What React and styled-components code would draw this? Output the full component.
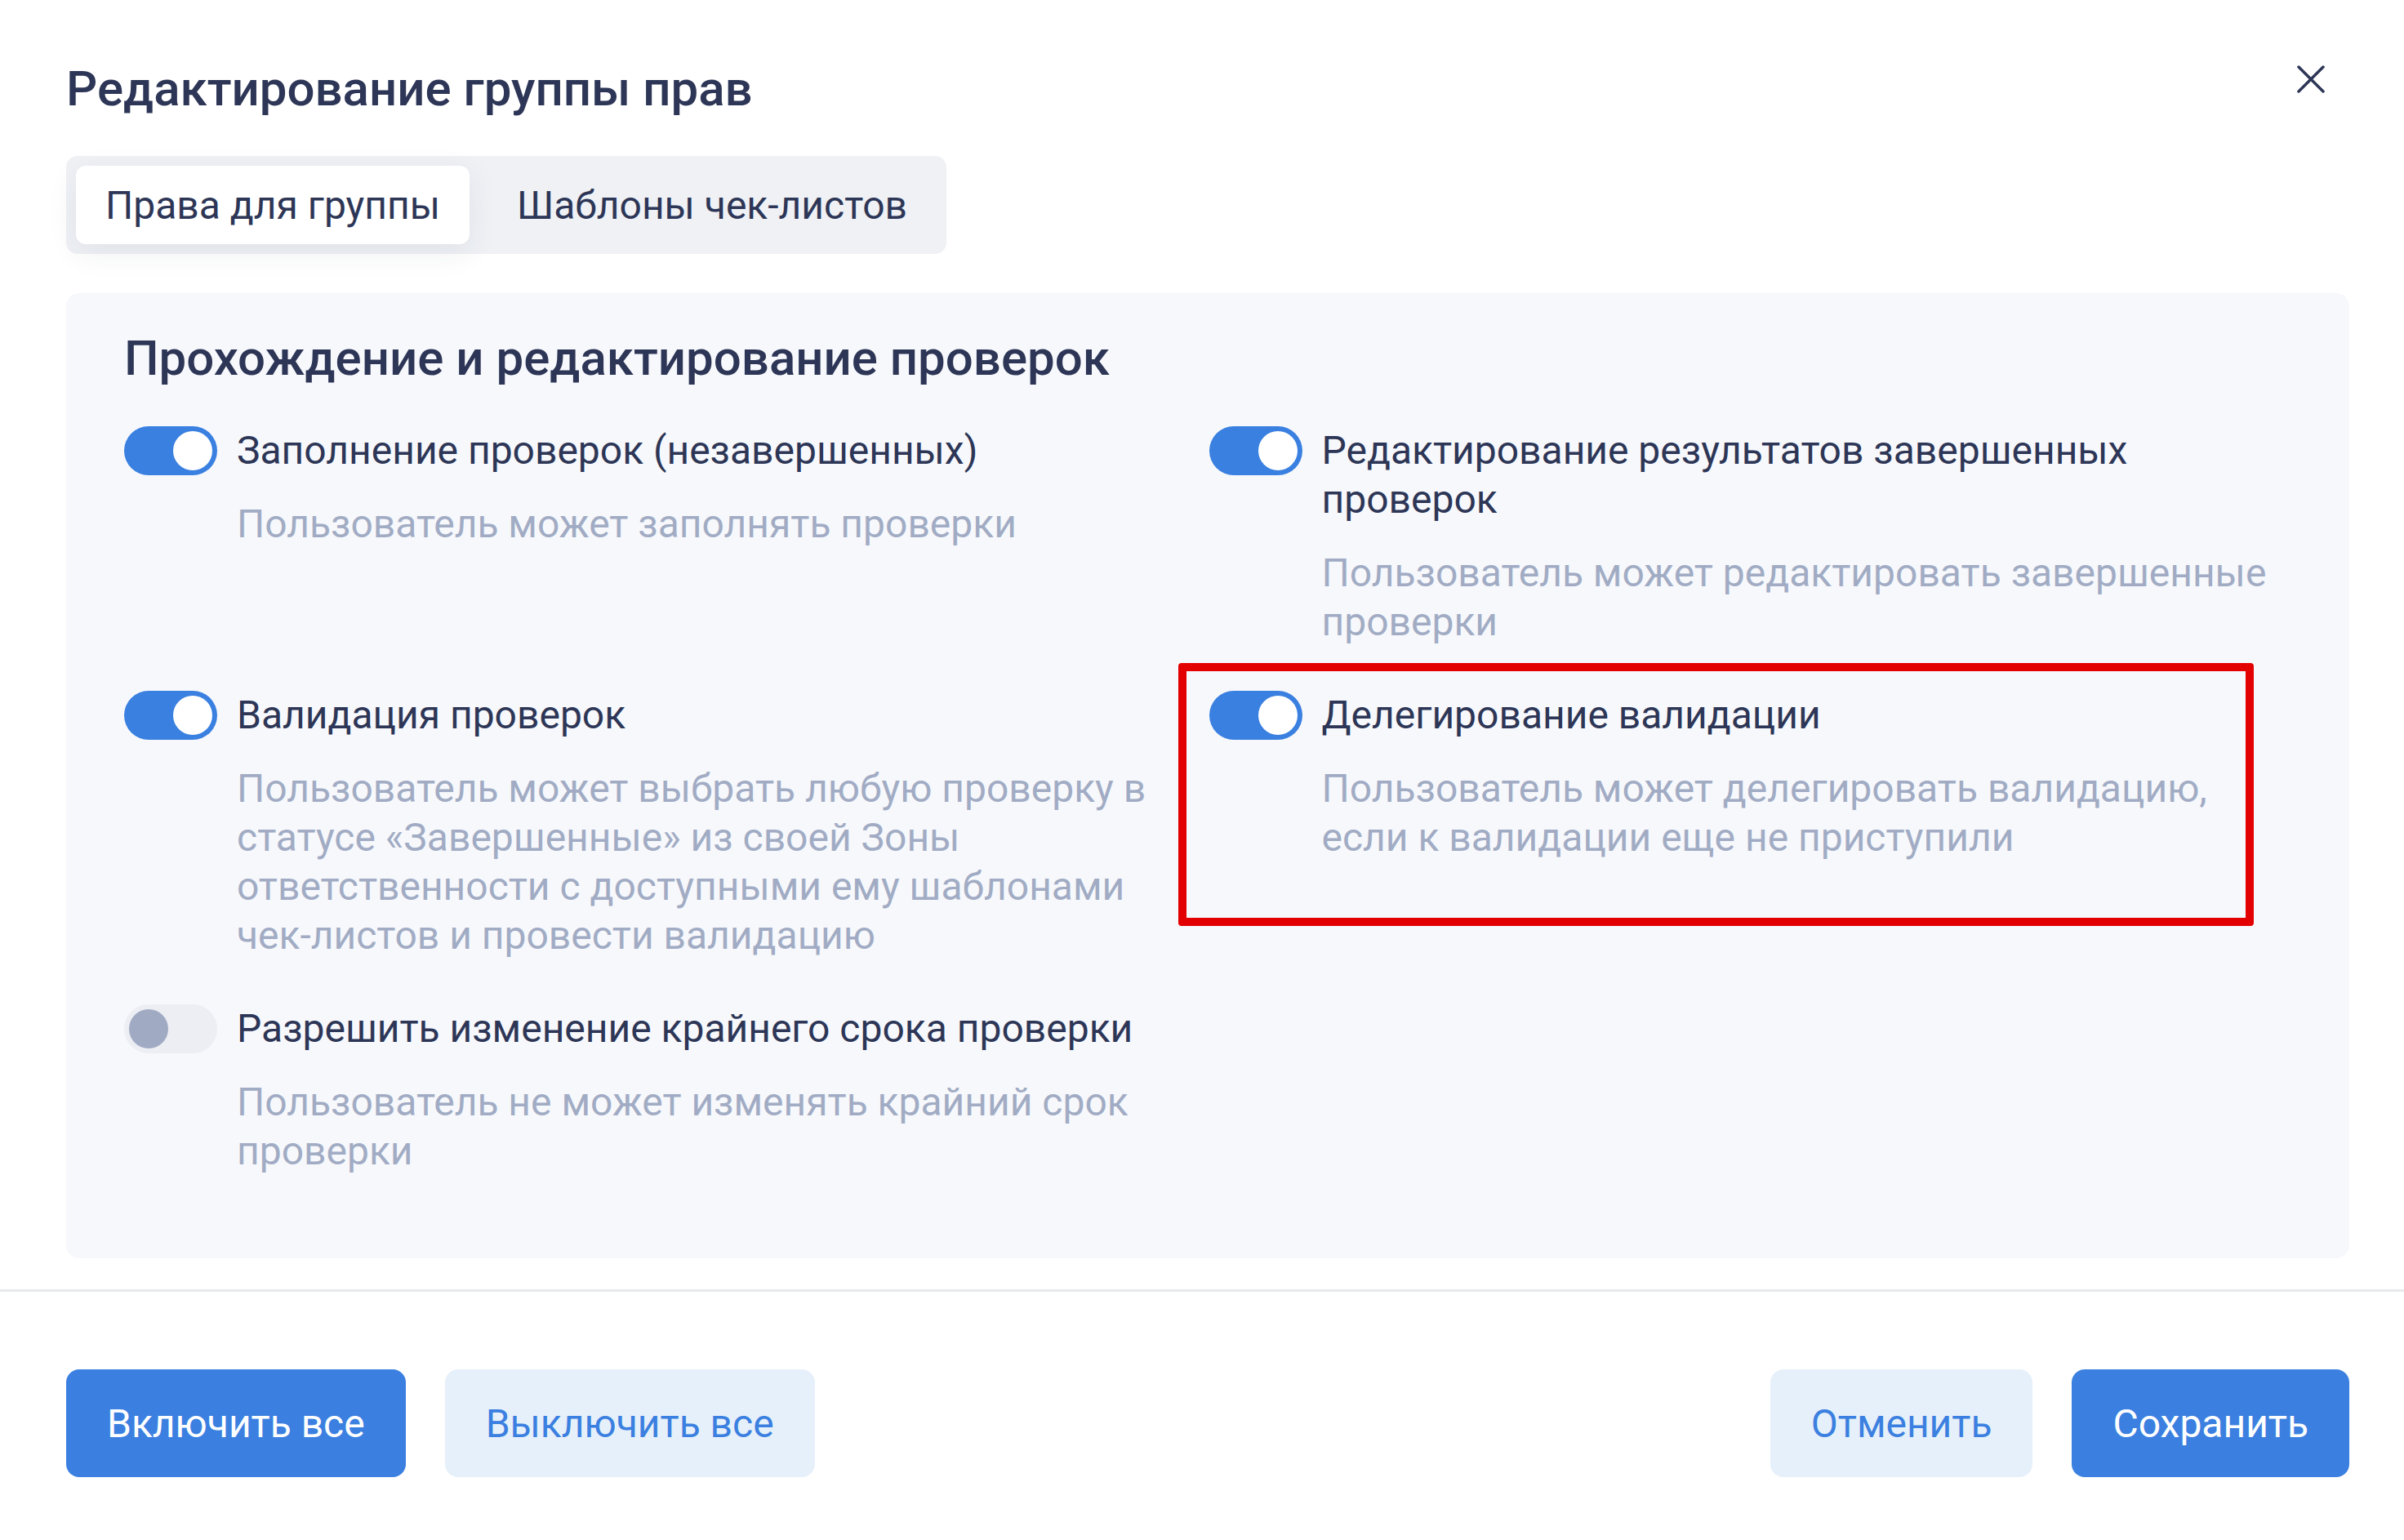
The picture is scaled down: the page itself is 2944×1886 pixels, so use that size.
import React from "react";
import styled, { createGlobalStyle } from "styled-components";

const GlobalStyle = createGlobalStyle`
  body {
    margin: 0;
    background: #fff;
    font-family: Roboto, "Noto Sans", "Liberation Sans", sans-serif;
  }
  * { box-sizing: border-box; }
`;

const Dialog = styled.div`
  width: 2944px;
  min-height: 1886px;
  display: flex;
  flex-direction: column;
  background: #fff;
`;

const Body = styled.div`
  padding: 74px 67px 0 81px;
`;

const Header = styled.div`
  display: flex;
  justify-content: space-between;
  align-items: flex-start;
`;

const Title = styled.h1`
  margin: 0;
  font-size: 60px;
  font-weight: 500;
  line-height: 70px;
  color: #2d3656;
`;

const CloseButton = styled.button`
  width: 64px;
  height: 64px;
  margin: -9px 15px 0 0;
  padding: 0;
  border: none;
  background: transparent;
  display: flex;
  align-items: center;
  justify-content: center;
  cursor: pointer;
`;

const Tabs = styled.div`
  display: inline-flex;
  gap: 22px;
  margin-top: 47px;
  padding: 12px;
  background: #eff1f5;
  border-radius: 14px;
`;

const Tab = styled.div`
  height: 96px;
  padding: 0 36px;
  display: flex;
  align-items: center;
  font-size: 48px;
  color: #2d3656;
  border-radius: 12px;
  background: ${({ active }) => (active ? "#fff" : "transparent")};
  box-shadow: ${({ active }) =>
    active ? "0 10px 36px rgba(40, 50, 80, 0.08)" : "none"};
`;

const Panel = styled.section`
  margin-top: 48px;
  padding: 45px 72px 101px 71px;
  background: #f7f8fc;
  border-radius: 16px;
`;

const SectionTitle = styled.h2`
  margin: 0 0 48px;
  font-size: 60px;
  font-weight: 500;
  line-height: 70px;
  color: #2d3656;
`;

const Grid = styled.div`
  display: grid;
  grid-template-columns: 1fr 1fr;
  row-gap: 54px;
`;

const Item = styled.div`
  position: relative;
  display: flex;
  align-items: flex-start;
  gap: 24px;
  padding-left: ${({ inset }) => (inset ? "2px" : "0")};
`;

const Toggle = styled.div`
  flex-shrink: 0;
  width: 114px;
  height: 60px;
  padding: 0 6px;
  border-radius: 30px;
  display: flex;
  align-items: center;
  justify-content: ${({ on }) => (on ? "flex-end" : "flex-start")};
  background: ${({ on }) => (on ? "#3a80e0" : "#eceef3")};
`;

const Knob = styled.span`
  width: 48px;
  height: 48px;
  border-radius: 50%;
  background: ${({ on }) => (on ? "#fff" : "#a0aac3")};
`;

const Texts = styled.div`
  flex: 1;
  min-width: 0;
`;

const Label = styled.div`
  font-size: 48px;
  line-height: 60px;
  color: #2d3656;
`;

const Hint = styled.div`
  margin-top: 30px;
  font-size: 48px;
  line-height: 60px;
  color: #a1acc4;
`;

const NoWrap = styled.span`
  white-space: nowrap;
`;

const Highlight = styled.div`
  position: absolute;
  left: -36px;
  top: -34px;
  width: 1317px;
  height: 322px;
  border: 10px solid #e20000;
  border-radius: 4px;
  pointer-events: none;
`;

const Footer = styled.footer`
  margin-top: 38px;
  border-top: 3px solid #e8e9ec;
  padding: 95px 67px 78px 81px;
  display: flex;
  justify-content: space-between;
`;

const ButtonGroup = styled.div`
  display: flex;
  gap: 48px;
`;

const Button = styled.button`
  height: 132px;
  padding: 0 50px;
  border: none;
  border-radius: 16px;
  font-family: inherit;
  font-size: 48px;
  cursor: pointer;
  background: ${({ primary }) => (primary ? "#3b80e0" : "#e6f0fa")};
  color: ${({ primary }) => (primary ? "#fff" : "#3b80e0")};
`;

const permissions = [
  {
    label: "Заполнение проверок (незавершенных)",
    hint: "Пользователь может заполнять проверки",
    on: true,
  },
  {
    label: "Редактирование результатов завершенных проверок",
    hint: "Пользователь может редактировать завершенные проверки",
    on: true,
    inset: true,
  },
  {
    label: "Валидация проверок",
    hint: (
      <>
        Пользователь может выбрать любую проверку в статусе «Завершенные» из
        своей Зоны ответственности с доступными ему шаблонами{" "}
        <NoWrap>чек-листов</NoWrap> и провести валидацию
      </>
    ),
    on: true,
  },
  {
    label: "Делегирование валидации",
    hint: "Пользователь может делегировать валидацию, если к валидации еще не приступили",
    on: true,
    inset: true,
    marked: true,
  },
  {
    label: "Разрешить изменение крайнего срока проверки",
    hint: "Пользователь не может изменять крайний срок проверки",
    on: false,
  },
];

function CloseIcon() {
  return (
    <svg width="34" height="34" viewBox="0 0 34 34" fill="none">
      <path
        d="M2 2L32 32M32 2L2 32"
        stroke="#2d3656"
        strokeWidth="3.5"
        strokeLinecap="round"
      />
    </svg>
  );
}

export default function App() {
  return (
    <Dialog>
      <GlobalStyle />
      <Body>
        <Header>
          <Title>Редактирование группы прав</Title>
          <CloseButton aria-label="Закрыть">
            <CloseIcon />
          </CloseButton>
        </Header>

        <Tabs>
          <Tab active>Права для группы</Tab>
          <Tab>Шаблоны чек-листов</Tab>
        </Tabs>

        <Panel>
          <SectionTitle>Прохождение и редактирование проверок</SectionTitle>
          <Grid>
            {permissions.map((p) => (
              <Item key={p.label} inset={p.inset}>
                <Toggle on={p.on}>
                  <Knob on={p.on} />
                </Toggle>
                <Texts>
                  <Label>{p.label}</Label>
                  <Hint>{p.hint}</Hint>
                </Texts>
                {p.marked && <Highlight />}
              </Item>
            ))}
          </Grid>
        </Panel>
      </Body>

      <Footer>
        <ButtonGroup>
          <Button primary>Включить все</Button>
          <Button>Выключить все</Button>
        </ButtonGroup>
        <ButtonGroup>
          <Button>Отменить</Button>
          <Button primary>Сохранить</Button>
        </ButtonGroup>
      </Footer>
    </Dialog>
  );
}
